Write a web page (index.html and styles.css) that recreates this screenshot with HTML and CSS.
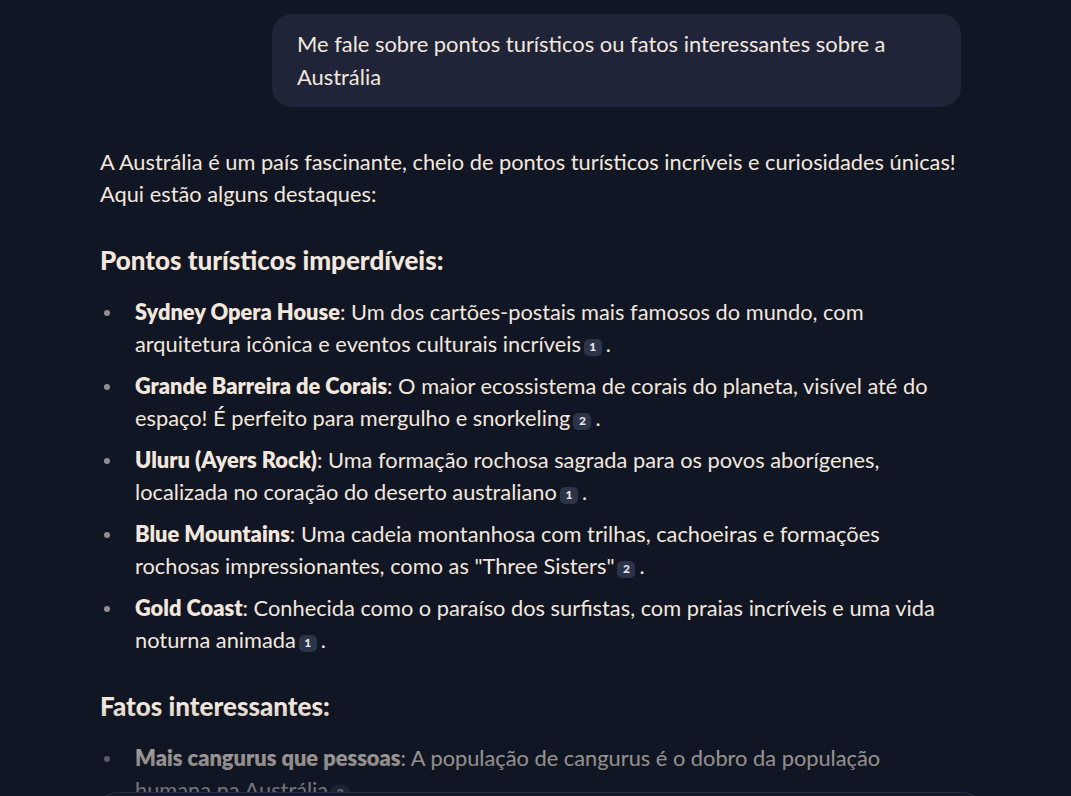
FILE: index.html
```html
<!DOCTYPE html>
<html lang="pt">
<head>
<meta charset="utf-8">
<title>Austrália</title>
<link rel="stylesheet" href="styles.css">
</head>
<body>
<main class="thread">
  <div class="user-row">
    <div class="user-bubble">Me fale sobre pontos turísticos ou fatos interessantes sobre a Austrália</div>
  </div>
  <div class="answer">
    <p class="intro">A Austrália é um país fascinante, cheio de pontos turísticos incríveis e curiosidades únicas! Aqui estão alguns destaques:</p>
    <h3 class="section-title">Pontos turísticos imperdíveis:</h3>
    <ul class="list">
      <li><strong>Sydney Opera House</strong>: Um dos cartões-postais mais famosos do mundo, com arquitetura icônica e eventos culturais incríveis<span class="cite">1</span>.</li>
      <li><strong>Grande Barreira de Corais</strong>: O maior ecossistema de corais do planeta, visível até do espaço! É perfeito para mergulho e snorkeling<span class="cite">2</span>.</li>
      <li><strong>Uluru (Ayers Rock)</strong>: Uma formação rochosa sagrada para os povos aborígenes, localizada no coração do deserto australiano<span class="cite">1</span>.</li>
      <li><strong>Blue Mountains</strong>: Uma cadeia montanhosa com trilhas, cachoeiras e formações rochosas impressionantes, como as "Three Sisters"<span class="cite">2</span>.</li>
      <li><strong>Gold Coast</strong>: Conhecida como o paraíso dos surfistas, com praias incríveis e uma vida noturna animada<span class="cite">1</span>.</li>
    </ul>
    <h3 class="section-title">Fatos interessantes:</h3>
    <ul class="list">
      <li><strong>Mais cangurus que pessoas</strong>: A população de cangurus é o dobro da população humana na Austrália<span class="cite">3</span>.</li>
    </ul>
  </div>
</main>
<div class="fade"></div>
<div class="composer"></div>
</body>
</html>
```
FILE: styles.css
```css
html, body {
  margin: 0;
  padding: 0;
  background: #111624;
  height: 100%;
  overflow: hidden;
}
body {
  font-family: Lato, "Noto Sans", sans-serif;
  color: #f3e7dd;
  font-size: 21.8px;
}
.thread {
  width: 861px;
  margin-left: 100px;
  padding-top: 14px;
}
.user-row {
  display: flex;
  justify-content: flex-end;
}
.user-bubble {
  width: 639px;
  background: #1f2438;
  border-radius: 20px;
  padding: 13px 25px 14px;
  line-height: 33px;
  font-size: 21.9px;
}
.answer {
  padding-top: 39px;
}
.intro {
  margin: 0;
  line-height: 32px;
}
.section-title {
  margin: 34px 0 20px;
  font-size: 26px;
  font-weight: 900;
  line-height: 32px;
}
.list {
  margin: 0;
  padding: 0;
  list-style: none;
  display: flex;
  flex-direction: column;
  gap: 10px;
}
.list li {
  position: relative;
  padding-left: 35px;
  line-height: 32px;
}
.list li::before {
  content: "";
  position: absolute;
  left: 4px;
  top: 14px;
  width: 6px;
  height: 6px;
  border-radius: 50%;
  background: #958d94;
}
.list strong {
  font-weight: 800;
}
.cite {
  display: inline-flex;
  align-items: center;
  justify-content: center;
  width: 18px;
  height: 17px;
  margin: 0 4px 0 3px;
  border-radius: 5px;
  background: #2c3449;
  color: #ece6e2;
  font-size: 12px;
  font-weight: 900;
  line-height: 1;
  vertical-align: 1px;
}
.fade {
  position: fixed;
  left: 0;
  right: 0;
  bottom: 0;
  height: 90px;
  background: linear-gradient(to bottom, rgba(17,22,36,0) 0%, rgba(17,22,36,0.3) 35%, rgba(17,22,36,0.6) 100%);
  pointer-events: none;
}
.composer {
  position: fixed;
  left: 92px;
  width: 894px;
  top: 792px;
  height: 120px;
  border-radius: 26px;
  border: 1px solid #262e47;
  background: #131a2b;
}
```
